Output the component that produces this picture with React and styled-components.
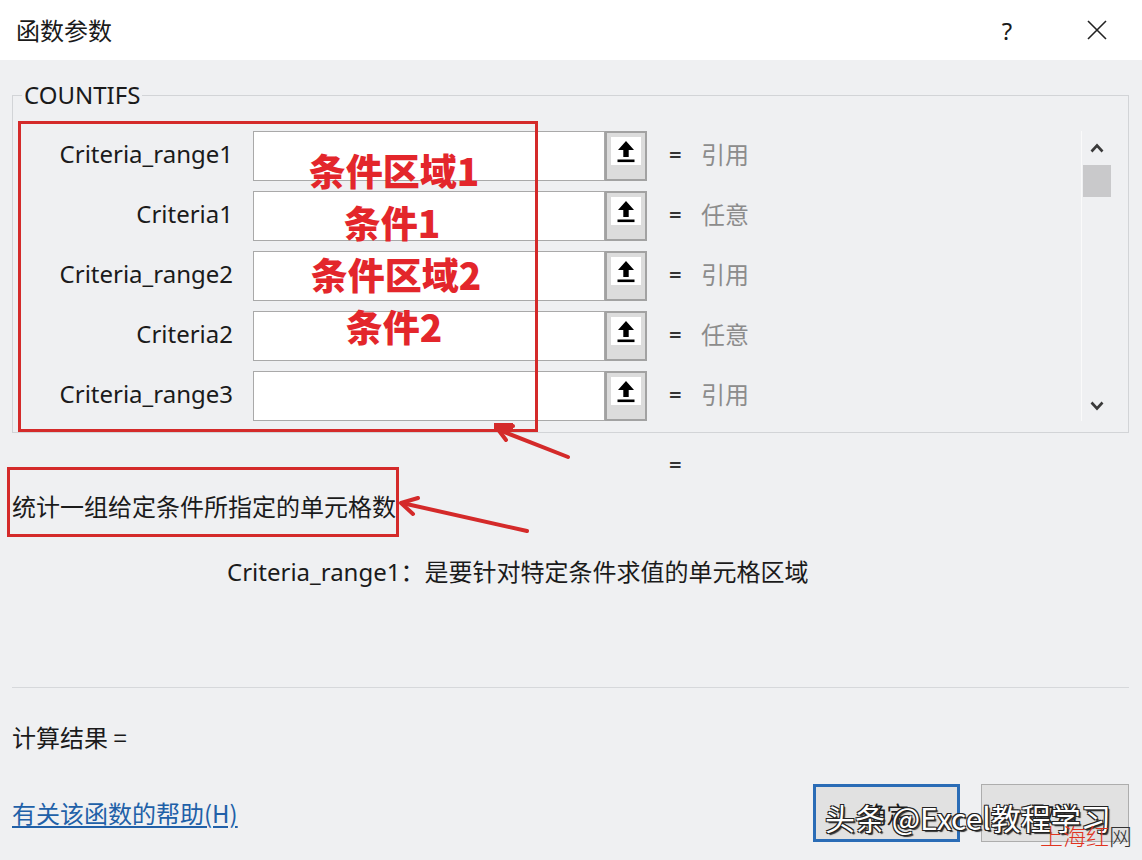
import React from 'react';
import styled, { createGlobalStyle } from 'styled-components';

const Global = createGlobalStyle`
  html, body { margin: 0; padding: 0; background: #eff0f2; }
  body { font-family: "Noto Sans CJK SC", "Noto Sans", sans-serif; color: #1b1b1b; }
  * { box-sizing: border-box; }
`;

const Dialog = styled.div`
  position: relative;
  width: 1142px;
  height: 860px;
  overflow: hidden;
  background: #eff0f2;
  display: flex;
  flex-direction: column;
`;

const TitleBar = styled.div`
  flex: none;
  height: 60px;
  background: #ffffff;
  display: flex;
  align-items: center;
  padding-left: 16px;
`;

const Title = styled.div`
  flex: 1;
  font-size: 24px;
  line-height: 30px;
  color: #1a1a1a;
`;

const TitleButton = styled.div`
  width: 90px;
  height: 60px;
  display: flex;
  align-items: center;
  justify-content: center;
  font-family: "Noto Sans", sans-serif;
  font-size: 24px;
  color: #1a1a1a;
`;

const Body = styled.div`
  flex: 1;
  display: flex;
  flex-direction: column;
  padding: 20px 13px 0 12px;
`;

const Group = styled.fieldset`
  margin: 0;
  min-width: 0;
  border: 1px solid #d2d4d7;
  padding: 21px 0 11px 0;
`;

const Legend = styled.legend`
  margin-left: 9px;
  padding: 0 2px;
  font-family: "Noto Sans", sans-serif;
  font-size: 24px;
  line-height: 30px;
  color: #1a1a1a;
`;

const GroupInner = styled.div`
  display: flex;
`;

const RowList = styled.div`
  flex: 1;
  display: flex;
  flex-direction: column;
  gap: 10px;
`;

const Row = styled.div`
  height: 50px;
  display: flex;
  align-items: center;
`;

const Label = styled.div`
  width: 220px;
  text-align: right;
  font-family: "Noto Sans", sans-serif;
  font-size: 24px;
  line-height: 30px;
  margin-top: -4px;
  color: #1b1b1b;
`;

const InputBox = styled.div`
  margin-left: 20px;
  width: 352px;
  height: 50px;
  background: #ffffff;
  border: 1px solid #a9a9a9;
`;

const RefButton = styled.div`
  width: 42px;
  height: 50px;
  border: 2px solid #a2a2a2;
  background: #dcdcdc;
  padding: 4px 4px 0 4px;
`;

const RefFace = styled.div`
  height: 28px;
  background: #ffffff;
  display: flex;
  align-items: center;
  justify-content: center;
`;

const Eq = styled.div`
  margin-left: 22px;
  width: 12px;
  font-family: "Noto Sans", sans-serif;
  font-size: 22px;
  font-weight: 600;
  margin-top: -4px;
  color: #333;
`;

const Value = styled.div`
  margin-left: 20px;
  font-size: 24px;
  margin-top: -6px;
  color: #8c8c8c;
`;

const Scrollbar = styled.div`
  width: 31px;
  margin-right: 16px;
  height: 290px;
  border-left: 1px solid #fafafa;
  display: flex;
  flex-direction: column;
  align-items: center;
  padding-top: 12px;
`;

const Thumb = styled.div`
  width: 28px;
  height: 32px;
  margin-top: 12px;
  background: #c9c9cb;
`;

const Spacer = styled.div`
  flex: 1;
`;

const Chevron = styled.svg`
  display: block;
  margin-bottom: ${p => (p.$down ? '10px' : '0')};
`;

const EqLine = styled.div`
  margin-top: 16px;
  padding-left: 657px;
  font-family: "Noto Sans", sans-serif;
  font-size: 22px;
  font-weight: 600;
  line-height: 30px;
  color: #333;
`;

const Desc = styled.div`
  margin-top: 12px;
  font-size: 24px;
  line-height: 30px;
  color: #1b1b1b;
`;

const ArgDesc = styled.div`
  margin-top: 35px;
  padding-left: 215px;
  font-size: 24px;
  line-height: 30px;
  color: #1b1b1b;
`;

const Latin = styled.span`
  font-family: "Noto Sans", sans-serif;
  font-size: 24px;
`;

const Separator = styled.div`
  margin-top: 100px;
  border-top: 1px solid #d6d8db;
`;

const Result = styled.div`
  margin-top: 34px;
  font-size: 24px;
  line-height: 30px;
  color: #1b1b1b;
`;

const Footer = styled.div`
  margin-top: 32px;
  display: flex;
  align-items: center;
`;

const HelpLink = styled.a`
  flex: 1;
  font-size: 24px;
  line-height: 30px;
  color: #2160a8;
  text-decoration: underline;
  text-underline-offset: 3px;
`;

const DlgButton = styled.div`
  width: ${p => (p.$primary ? '147px' : '148px')};
  height: 58px;
  margin-left: ${p => (p.$primary ? '0' : '21px')};
  border: ${p => (p.$primary ? '3px solid #2a6cb6' : '1px solid #adadad')};
  background: #e1e1e1;
  display: flex;
  align-items: center;
  justify-content: center;
  font-size: 23px;
  color: #1b1b1b;
`;

/* ---------- annotation overlay ---------- */

const RedBox = styled.div`
  position: absolute;
  border: 3px solid #d42a2a;
  pointer-events: none;
`;

const RangeBox = styled(RedBox)`
  left: 18px;
  top: 121px;
  width: 520px;
  height: 311px;
  display: flex;
  flex-direction: column;
  align-items: center;
  padding: 20px 0 0 232px;
`;

const DescBox = styled(RedBox)`
  left: 7px;
  top: 467px;
  width: 392px;
  height: 70px;
`;

const Note = styled.div`
  height: 52px;
  line-height: 52px;
  margin-left: ${p => p.$shift || 0}px;
  font-family: "Noto Sans CJK SC", sans-serif;
  font-weight: 900;
  font-size: 37px;
  color: #e3262b;
`;

const ArrowLayer = styled.svg`
  position: absolute;
  left: 0;
  top: 0;
  pointer-events: none;
`;

const Watermark = styled.div`
  position: absolute;
  left: 825px;
  top: 799px;
  font-size: 30px;
  line-height: 36px;
  color: #ffffff;
  white-space: nowrap;
  pointer-events: none;
  text-shadow: 1px 1px 0 #222, -1px -1px 0 #222, 1px -1px 0 #222, -1px 1px 0 #222, 2px 2px 1px #333;
`;

const SiteMark = styled.div`
  position: absolute;
  left: 1040px;
  top: 820px;
  font-size: 23px;
  line-height: 30px;
  font-weight: 300;
  color: #333;
  white-space: nowrap;
  pointer-events: none;
`;

const SiteRed = styled.span`
  color: #e0341f;
`;

const UploadIcon = () => (
  <svg width="18" height="23" viewBox="0 0 18 23">
    <path d="M9 1 L1 10 H6.3 V17 H11.7 V10 H17 Z" fill="#000" />
    <rect x="0.5" y="19.5" width="17" height="2.6" fill="#000" />
  </svg>
);

const rows = [
  { label: 'Criteria_range1', value: '引用' },
  { label: 'Criteria1', value: '任意' },
  { label: 'Criteria_range2', value: '引用' },
  { label: 'Criteria2', value: '任意' },
  { label: 'Criteria_range3', value: '引用' },
];

export default function App() {
  return (
    <>
      <Global />
      <Dialog>
        <TitleBar>
          <Title>函数参数</Title>
          <TitleButton>?</TitleButton>
          <TitleButton>
            <svg width="20" height="20" viewBox="0 0 20 20">
              <path d="M1 1 L19 19 M19 1 L1 19" stroke="#222" strokeWidth="1.6" />
            </svg>
          </TitleButton>
        </TitleBar>
        <Body>
          <Group>
            <Legend>COUNTIFS</Legend>
            <GroupInner>
              <RowList>
                {rows.map(r => (
                  <Row key={r.label}>
                    <Label>{r.label}</Label>
                    <InputBox />
                    <RefButton>
                      <RefFace>
                        <UploadIcon />
                      </RefFace>
                    </RefButton>
                    <Eq>=</Eq>
                    <Value>{r.value}</Value>
                  </Row>
                ))}
              </RowList>
              <Scrollbar>
                <Chevron width="14" height="10" viewBox="0 0 14 10">
                  <path d="M1.5 8.5 L7 2.5 L12.5 8.5" fill="none" stroke="#3a3a3a" strokeWidth="2.6" />
                </Chevron>
                <Thumb />
                <Spacer />
                <Chevron $down width="14" height="10" viewBox="0 0 14 10">
                  <path d="M1.5 1.5 L7 7.5 L12.5 1.5" fill="none" stroke="#3a3a3a" strokeWidth="2.6" />
                </Chevron>
              </Scrollbar>
            </GroupInner>
          </Group>
          <EqLine>=</EqLine>
          <Desc>统计一组给定条件所指定的单元格数</Desc>
          <ArgDesc>
            <Latin>Criteria_range1</Latin>：是要针对特定条件求值的单元格区域
          </ArgDesc>
          <Separator />
          <Result>计算结果 =</Result>
          <Footer>
            <HelpLink>有关该函数的帮助(H)</HelpLink>
            <DlgButton $primary>确定</DlgButton>
            <DlgButton>取消</DlgButton>
          </Footer>
        </Body>

        <RangeBox>
          <Note $shift={0}>条件区域1</Note>
          <Note $shift={-4}>条件1</Note>
          <Note $shift={4}>条件区域2</Note>
          <Note $shift={0}>条件2</Note>
        </RangeBox>
        <DescBox />
        <ArrowLayer width="1142" height="860" viewBox="0 0 1142 860">
          <g stroke="#d42a2a" strokeWidth="4" fill="none" strokeLinecap="round" strokeLinejoin="round">
            <path d="M568 457 L499 430" />
            <path d="M513 426 L497 428 L506 440" />
            <path d="M527 531 L402 503" />
            <path d="M418 498 L401 503 L413 514" />
          </g>
          <rect x="494" y="423" width="19" height="7" fill="#d42a2a" />
        </ArrowLayer>
        <Watermark>头条 @Excel教程学习</Watermark>
        <SiteMark>
          <SiteRed>上海红</SiteRed>网
        </SiteMark>
      </Dialog>
    </>
  );
}
